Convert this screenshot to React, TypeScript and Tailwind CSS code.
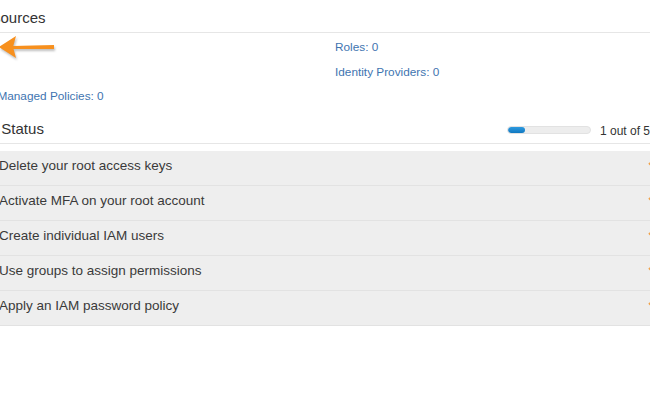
import React from 'react';

const steps = [
  'Delete your root access keys',
  'Activate MFA on your root account',
  'Create individual IAM users',
  'Use groups to assign permissions',
  'Apply an IAM password policy',
];

export default function App() {
  return (
    <div
      className="relative w-[650px] h-[400px] overflow-hidden bg-white text-[#333]"
      style={{ fontFamily: '"Liberation Sans", Arial, sans-serif' }}
    >
      <div className="-ml-[57px] w-[720px]">
        {/* IAM Resources */}
        <div className="h-[33px] pt-[8px] border-b border-[#e6e6e6] text-[15px] leading-[20px]">
          IAM Resources
        </div>

        <div className="mt-[6px] flex text-[11.8px] leading-[16px] text-[#3e74b0]">
          <div className="w-[392px] flex flex-col gap-y-[8.5px]">
            <span>Users: 0</span>
            <span>Groups: 0</span>
            <span>Customer Managed Policies: 0</span>
          </div>
          <div className="flex flex-col gap-y-[8.5px]">
            <span>Roles: 0</span>
            <span>Identity Providers: 0</span>
          </div>
        </div>

        {/* Security Status */}
        <div className="mt-[13px] h-[27px] flex items-center border-b border-[#e6e6e6]">
          <span className="flex-1 text-[15px] leading-[20px] -mt-[2px]">Security Status</span>
          <div className="w-[84px] h-[8px] rounded-full bg-[#ededed] border border-[#e2e2e2] overflow-hidden">
            <div className="h-full w-[17px] rounded-full bg-gradient-to-b from-[#2d9ae0] to-[#0f78c0]" />
          </div>
          <span className="ml-[9px] w-[63px] text-[12px] leading-[16px] mt-[1px]">1 out of 5</span>
        </div>

        <div className="mt-[7px] flex flex-col">
          {steps.map((s) => (
            <div
              key={s}
              className="h-[35px] flex items-center bg-[#eeeeee] border-b border-[#e2e2e2] pl-[56px] pr-[5px] text-[13.5px] text-[#3a3a3a]"
            >
              <span className="flex-1 -mt-[3px]">{s}</span>
              <svg width="10" height="10" viewBox="0 0 10 10" className="-mt-[6px] shrink-0">
                <path d="M1 3 L5 7 L9 3" fill="none" stroke="#f0a24a" strokeWidth="2" />
              </svg>
            </div>
          ))}
        </div>
      </div>

      {/* annotation arrow */}
      <svg
        className="absolute left-0 top-[35px] drop-shadow-[1px_2px_1px_rgba(0,0,0,0.25)]"
        width="58"
        height="24"
        viewBox="0 0 58 24"
      >
        <path d="M12 11 L54 10 L54 14 L12 14 Z" fill="#f7901e" />
        <path d="M-1 12 L16 1 L13 12 L16 23 Z" fill="#f7901e" />
      </svg>
    </div>
  );
}
